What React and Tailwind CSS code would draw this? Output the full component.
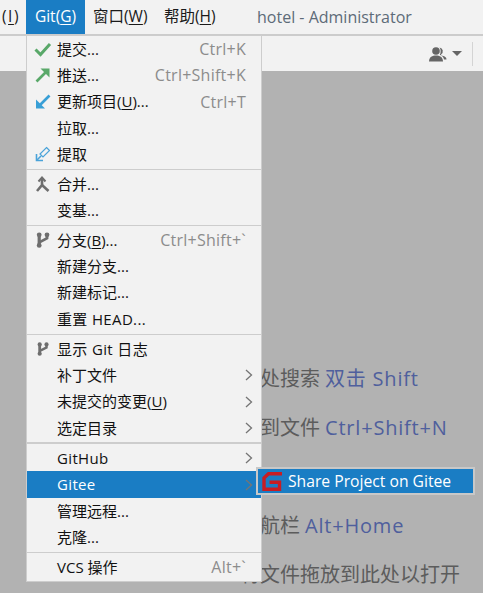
const font = { fontFamily: '"Open Sans", "Noto Sans CJK SC", sans-serif' };

const CheckIcon = () => (
  <svg width="18" height="16" viewBox="0 0 18 16">
    <path d="M1.5 8.5 6.5 13.5 16 3" fill="none" stroke="#59a869" strokeWidth="3" />
  </svg>
);

const PushIcon = () => (
  <svg width="16" height="16" viewBox="0 0 16 16">
    <path d="M1.5 14.5 12 4" fill="none" stroke="#59a869" strokeWidth="2.6" />
    <path d="M5.5 1.5H14.5V10.5Z" fill="#59a869" />
  </svg>
);

const UpdateIcon = () => (
  <svg width="16" height="16" viewBox="0 0 16 16">
    <path d="M14.5 1.5 4 12" fill="none" stroke="#389fd6" strokeWidth="2.6" />
    <path d="M1 5.5V14.5H10Z" fill="#389fd6" />
  </svg>
);

const FetchIcon = () => (
  <svg width="16" height="16" viewBox="0 0 16 16" fill="none" stroke="#4aa3d9" strokeWidth="1.2">
    <path d="M11.5 1.5 14.5 4.5 8 11 5 8Z" />
    <path d="M1.5 8V14.5H8" strokeWidth="1.6" />
    <path d="M2 14 6 10" strokeWidth="1.6" />
  </svg>
);

const MergeIcon = () => (
  <svg width="16" height="17" viewBox="0 0 16 17" fill="none" stroke="#6e6e6e" strokeWidth="2.6">
    <path d="M7 3V9L2 15" />
    <path d="M7 9 13.5 15" />
    <path d="M3.5 5.5 7 1.5 10.5 5.5" strokeWidth="2" />
  </svg>
);

const BranchIcon = ({ size = 16 }) => (
  <svg width={size} height={size} viewBox="0 0 16 16" fill="#6e6e6e">
    <rect x="2.6" y="2" width="3.2" height="12" />
    <circle cx="4.2" cy="2.8" r="2.4" />
    <circle cx="4.2" cy="13.4" r="2.4" />
    <circle cx="12" cy="2.8" r="2.4" />
    <path d="M10.6 3H13.4V7L5 11.5V8.4L10.6 5.4Z" />
  </svg>
);

const GiteeIcon = () => (
  <svg width="21" height="21" viewBox="0 0 21 21" fill="none" stroke="#c71d23" strokeWidth="3.4">
    <path d="M20 2.7H6.5L2 7V18.3H17.5V11.2H7.5" />
  </svg>
);

const Chevron = () => (
  <svg width="8" height="12" viewBox="0 0 8 12" fill="none" stroke="#757575" strokeWidth="1.3">
    <path d="M1 1 6.5 6 1 11" />
  </svg>
);

const UserIcon = () => (
  <svg width="18" height="16" viewBox="0 0 18 16" fill="#666666">
    <circle cx="7" cy="5" r="3.8" />
    <path d="M0 15.5C0 11 3.5 9.5 7 9.5S14 11 14 15.5Z" />
    <path d="M10.5 1.4A3.8 3.8 0 0 1 12 8.4L12.5 9.6C15 10 17.5 11 17.5 13.5H15C14.5 11 13 9.5 10.8 8.7 12 7 12 3 10.5 1.4Z" />
  </svg>
);

const Key = ({ children }) => <span className="underline underline-offset-2">{children}</span>;

const Separator = ({ className, thick }) => (
  <div className={`flex items-center ${className}`}>
    <div className={thick ? 'h-[2px] w-full bg-[#cdcdcd]' : 'h-px w-full bg-[#cdcdcd]'} />
  </div>
);

const Row = ({ icon, label, shortcut, arrow, active, latin }) => (
  <div className={`flex h-[26.3px] items-center pr-[8px] ${active ? 'bg-[#1a7dc4] text-white' : 'text-[#111111]'}`}>
    <div className="flex w-[30px] shrink-0 items-center justify-center pl-[1px]">{icon}</div>
    <div className={latin ? 'whitespace-nowrap tracking-[0.35px]' : 'whitespace-nowrap'}>{label}</div>
    {shortcut && <div className="ml-auto pr-[7px] whitespace-nowrap text-[16px] tracking-[0.25px] text-[#8c8c8c]">{shortcut}</div>}
    {arrow && <div className="ml-auto flex"><Chevron /></div>}
  </div>
);

const Hint = ({ text, keys }) => (
  <div className="flex h-[49px] items-center gap-[5px] whitespace-nowrap text-[20px] text-[#5c5c5c]">
    {text && <span>{text}</span>}
    {keys && <span className="tracking-[0.8px] text-[#4f5f9d]">{keys}</span>}
  </div>
);

export default function App() {
  return (
    <div className="relative flex h-[593px] w-[483px] flex-col overflow-hidden bg-[#b2b2b2] text-[15px]" style={font}>
      {/* menu bar */}
      <div className="flex h-[36px] shrink-0 items-center border-b-2 border-[#cccccc] bg-[#f2f2f2] text-[15.5px] text-[#1a1a1a]">
        <div className="w-[26px] pl-[2px] tracking-[1.5px]">(<Key>I</Key>)</div>
        <div className="flex h-full w-[59px] items-center justify-center bg-[#1a7dc4] text-white">
          Git(<Key>G</Key>)
        </div>
        <div className="ml-[8px] w-[71px] whitespace-nowrap">窗口(<Key>W</Key>)</div>
        <div className="w-[93px] whitespace-nowrap">帮助(<Key>H</Key>)</div>
        <div className="whitespace-nowrap text-[16px] text-[#5d6b78]">hotel - Administrator</div>
      </div>

      {/* toolbar */}
      <div className="flex h-[35px] shrink-0 items-center justify-end bg-[#f2f2f2] pr-[10px]">
        <UserIcon />
        <div className="ml-[5px] h-0 w-0 border-x-[5px] border-t-[5px] border-x-transparent border-t-[#666666]" />
        <div className="ml-[10px] h-[24px] w-px bg-[#d4d4d4]" />
      </div>

      {/* welcome hints behind the menu */}
      <div className="flex flex-col pl-[240px] pt-[283px]">
        <Hint text="随处搜索" keys="双击 Shift" />
        <Hint text="转到文件" keys="Ctrl+Shift+N" />
        <Hint />
        <Hint text="导航栏" keys="Alt+Home" />
        <Hint text="将文件拖放到此处以打开" />
      </div>

      {/* Git menu */}
      <div className="absolute left-[26px] top-[35px] w-[236px] border border-[#cdcdcd] bg-[#f2f2f2]">
        <Row icon={<CheckIcon />} label="提交..." shortcut="Ctrl+K" />
        <Row icon={<PushIcon />} label="推送..." shortcut="Ctrl+Shift+K" />
        <Row icon={<UpdateIcon />} label={<>更新项目(<Key>U</Key>)...</>} shortcut="Ctrl+T" />
        <Row label="拉取..." />
        <Row icon={<FetchIcon />} label="提取" />
        <Separator className="h-[3.5px]" />
        <Row icon={<MergeIcon />} label="合并..." />
        <Row label="变基..." />
        <Separator className="h-[3.4px]" />
        <Row icon={<BranchIcon />} label={<>分支(<Key>B</Key>)...</>} shortcut="Ctrl+Shift+`" />
        <Row label="新建分支..." />
        <Row label="新建标记..." />
        <Row label="重置 HEAD..." latin />
        <Separator className="h-[3.8px]" />
        <Row icon={<BranchIcon size={14} />} label="显示 Git 日志" latin />
        <Row label="补丁文件" arrow />
        <Row label={<>未提交的变更(<Key>U</Key>)</>} arrow />
        <Row label="选定目录" arrow />
        <Separator className="h-[4px]" thick />
        <Row label="GitHub" arrow latin />
        <Row label="Gitee" arrow active latin />
        <Row label="管理远程..." />
        <Row label="克隆..." />
        <Separator className="h-[4px]" />
        <Row label="VCS 操作" shortcut="Alt+`" />
      </div>

      {/* Gitee submenu */}
      <div className="absolute left-[256px] top-[467px] flex h-[28px] w-[219px] items-center gap-[5px] border-2 border-[#c8c8c8] bg-[#1a7dc4] pl-[4px] whitespace-nowrap text-[15.7px] text-white">
        <GiteeIcon />
        <span className="pt-[1px]">Share Project on Gitee</span>
      </div>
    </div>
  );
}
